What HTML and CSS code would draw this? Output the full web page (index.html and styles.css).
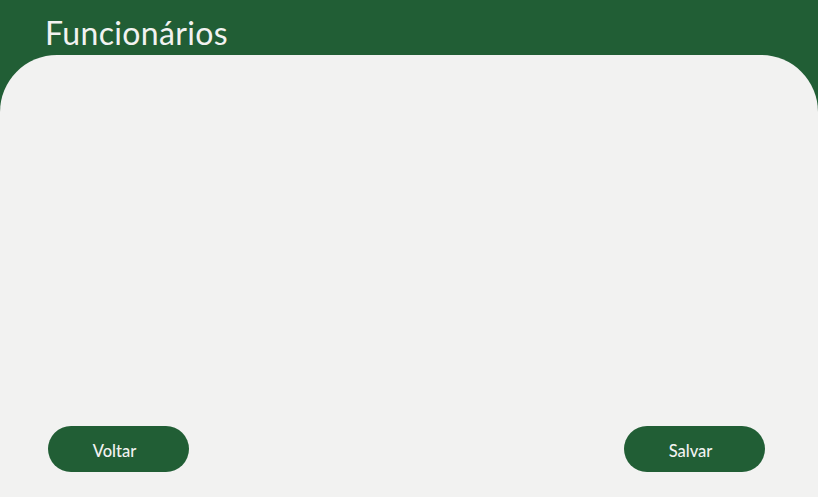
FILE: index.html
```html
<!DOCTYPE html>
<html lang="pt">
<head>
<meta charset="utf-8">
<title>Funcionários</title>
<link rel="stylesheet" href="styles.css">
</head>
<body>
<div class="page">
  <header class="header">
    <h1 class="title">Funcionários</h1>
  </header>
  <main class="panel">
    <div class="actions">
      <button class="btn">Voltar</button>
      <button class="btn">Salvar</button>
    </div>
  </main>
</div>
</body>
</html>
```
FILE: styles.css
```css
* { box-sizing: border-box; }
html, body { margin: 0; padding: 0; }
body {
  background: #215e35;
  font-family: "Lato", "Noto Sans", sans-serif;
  width: 818px;
  height: 497px;
  overflow: hidden;
}
.page {
  display: flex;
  flex-direction: column;
  height: 497px;
}
.header {
  height: 55px;
  padding-left: 45px;
  display: flex;
  align-items: flex-end;
}
.title {
  margin: 0 0 4px 0;
  color: #f2f2f1;
  font-size: 32px;
  font-weight: 400;
  line-height: 36px;
  letter-spacing: 0.35px;
}
.panel {
  flex: 1;
  background: #f2f2f1;
  border-radius: 57px 57px 0 0;
  display: flex;
  flex-direction: column;
  justify-content: flex-end;
  padding: 0 53px 25px 48px;
}
.actions {
  display: flex;
  justify-content: space-between;
}
.btn {
  width: 141px;
  height: 46px;
  border: none;
  border-radius: 23px;
  background: #215e35;
  color: #f2f2f1;
  font-family: inherit;
  font-size: 16.5px;
  font-weight: 500;
  padding: 3px 8px 0 0;
  cursor: pointer;
}
```
